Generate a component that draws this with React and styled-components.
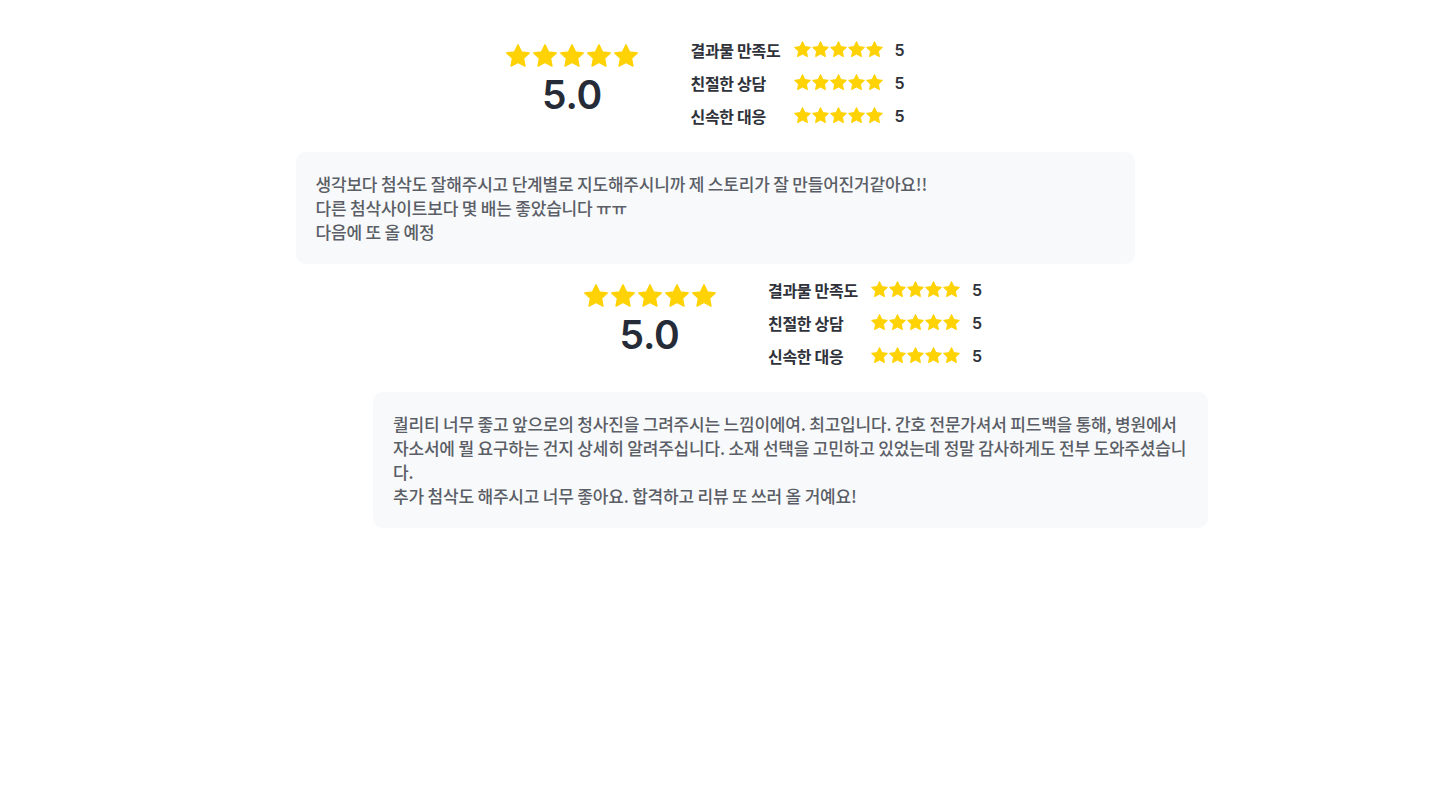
import React from "react";
import styled, { createGlobalStyle } from "styled-components";

const Global = createGlobalStyle`
  html, body { margin: 0; padding: 0; background: #fff; }
  body { font-family: "Noto Sans CJK KR", "Noto Sans", sans-serif; }
`;

const Page = styled.div`
  width: 1430px;
  min-height: 804px;
  display: flex;
  flex-direction: column;
  align-items: center;
  padding-top: 33px;
  gap: 9px;
  box-sizing: border-box;
`;

const Review = styled.section`
  width: ${(p) => p.$width}px;
  margin-left: ${(p) => p.$shift || 0}px;
  display: flex;
  flex-direction: column;
  align-items: center;
`;

const Summary = styled.div`
  display: flex;
  align-items: flex-start;
  gap: 52px;
  margin-bottom: 20px;
  padding-left: ${(p) => p.$nudge || 0}px;
`;

const Overall = styled.div`
  display: flex;
  flex-direction: column;
  align-items: center;
  width: 133px;
  padding-top: 11px;
`;

const StarRow = styled.div`
  display: flex;
  gap: ${(p) => p.$gap}px;
`;

const Score = styled.div`
  font-family: "Inter", "Noto Sans", sans-serif;
  font-weight: 600;
  font-size: 39px;
  line-height: 42px;
  color: #262b38;
  letter-spacing: -0.3px;
  margin-top: 6px;
`;

const Details = styled.div`
  display: flex;
  flex-direction: column;
`;

const DetailRow = styled.div`
  display: grid;
  grid-template-columns: 103px auto 42px;
  align-items: center;
  height: 33px;
`;

const Label = styled.span`
  font-size: 16px;
  font-weight: 700;
  color: #2f323a;
  letter-spacing: -0.3px;
`;

const Num = styled.span`
  font-family: "Inter", "Noto Sans", sans-serif;
  font-weight: 600;
  font-size: 16px;
  color: #2f323a;
  padding-left: 12px;
`;

const Box = styled.div`
  align-self: stretch;
  background: #f8f9fb;
  border-radius: 10px;
  padding: 20px;
  font-size: 17px;
  line-height: 24px;
  font-weight: 500;
  color: #5a5e66;
  letter-spacing: -0.2px;
  word-break: break-all;
  white-space: pre-line;
`;

const Star = ({ size }) => (
  <svg width={size} height={size} viewBox="1.7 1.5 20.6 20.6">
    <path
      d="M12 2.2l2.95 6.1 6.7.9-4.88 4.62 1.2 6.64L12 17.28l-5.97 3.18 1.2-6.64L2.35 9.2l6.7-.9z"
      fill="#FFD204"
      stroke="#FFD204"
      strokeWidth="1.2"
      strokeLinejoin="round"
    />
  </svg>
);

const Stars = ({ size, gap }) => (
  <StarRow $gap={gap}>
    {[0, 1, 2, 3, 4].map((i) => (
      <Star key={i} size={size} />
    ))}
  </StarRow>
);

const categories = ["결과물 만족도", "친절한 상담", "신속한 대응"];

const reviews = [
  {
    width: 839,
    shift: 0,
    nudge: 0,
    text: "생각보다 첨삭도 잘해주시고 단계별로 지도해주시니까 제 스토리가 잘 만들어진거같아요!!\n다른 첨삭사이트보다 몇 배는 좋았습니다 ㅠㅠ\n다음에 또 올 예정",
  },
  {
    width: 835,
    shift: 151,
    nudge: 4,
    text: "퀄리티 너무 좋고 앞으로의 청사진을 그려주시는 느낌이에여. 최고입니다. 간호 전문가셔서 피드백을 통해, 병원에서 자소서에 뭘 요구하는 건지 상세히 알려주십니다. 소재 선택을 고민하고 있었는데 정말 감사하게도 전부 도와주셨습니다.\n추가 첨삭도 해주시고 너무 좋아요. 합격하고 리뷰 또 쓰러 올 거예요!",
  },
];

export default function App() {
  return (
    <>
      <Global />
      <Page>
        {reviews.map((r, idx) => (
          <Review key={idx} $width={r.width} $shift={r.shift}>
            <Summary $nudge={r.nudge}>
              <Overall>
                <Stars size={24} gap={3} />
                <Score>5.0</Score>
              </Overall>
              <Details>
                {categories.map((c) => (
                  <DetailRow key={c}>
                    <Label>{c}</Label>
                    <Stars size={17} gap={1} />
                    <Num>5</Num>
                  </DetailRow>
                ))}
              </Details>
            </Summary>
            <Box>{r.text}</Box>
          </Review>
        ))}
      </Page>
    </>
  );
}
